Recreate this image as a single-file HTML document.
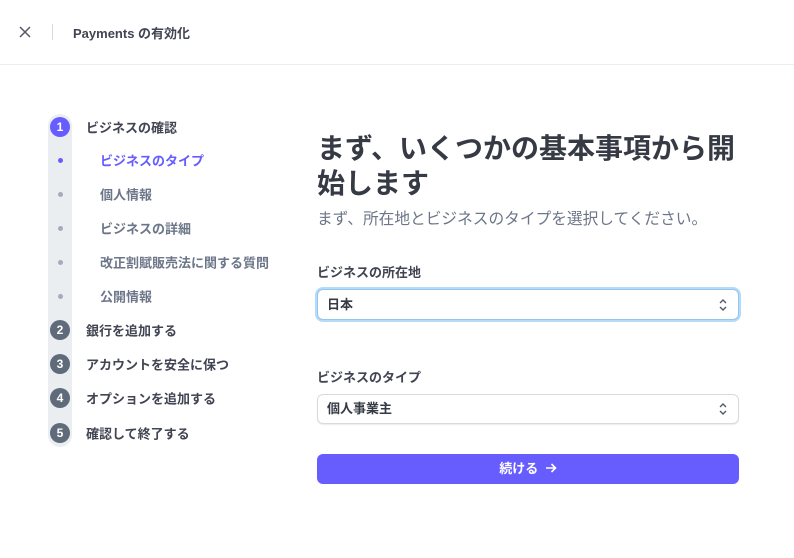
<!DOCTYPE html>
<html><head><meta charset="utf-8"><style>
*{box-sizing:border-box;margin:0;padding:0}
body{width:794px;height:558px;background:#fff;font-family:"Liberation Sans","Noto Sans CJK JP",sans-serif;color:#353a44;position:relative;overflow:hidden}
.a{position:absolute;white-space:nowrap}
.hdr{position:absolute;left:0;top:0;width:794px;height:65px;border-bottom:1px solid #ebeef1}
.track{position:absolute;left:48px;top:114px;width:24px;height:333px;background:#ebeef1;border-radius:12px}
.c{position:absolute;left:50px;width:20px;height:20px;border-radius:50%;background:#5f6b7a;color:#fff;font-size:12px;font-weight:bold;text-align:center;line-height:20px}
.d{position:absolute;left:58px;width:5px;height:5px;border-radius:50%;background:#a3acba}
.m{position:absolute;left:86px;font-size:13px;font-weight:bold;color:#414552;transform:translateY(-50%)}
.s{position:absolute;left:100px;font-size:13px;font-weight:bold;color:#6c7688;transform:translateY(-50%)}
.sel{position:absolute;left:317px;width:422px;background:#fff;border:1px solid #d5dbe1;border-radius:6px;box-shadow:0 1px 1px rgba(0,0,0,.08);font-size:13px;font-weight:bold;color:#353a44;padding-left:9px}
.chev{position:absolute;right:10px;top:50%;transform:translateY(-50%)}
</style></head><body>
<div class="hdr"></div>
<svg class="a" style="left:19px;top:26px" width="12" height="12" viewBox="0 0 12 12"><path d="M1 1L11 11M11 1L1 11" stroke="#545969" stroke-width="1.5" fill="none"/></svg>
<div class="a" style="left:52px;top:24px;width:1px;height:16px;background:#d5dbe1"></div>
<div class="a" style="left:73px;top:23px;font-size:13px;font-weight:bold;color:#414552">Payments の有効化</div>

<div class="track"></div>
<div class="c" style="top:117px;background:#675dff">1</div>
<div class="m" style="top:127px">ビジネスの確認</div>
<div class="d" style="top:158px;background:#675dff"></div><div class="s" style="top:160px;color:#675dff">ビジネスのタイプ</div>
<div class="d" style="top:192px"></div><div class="s" style="top:194px">個人情報</div>
<div class="d" style="top:226px"></div><div class="s" style="top:228px">ビジネスの詳細</div>
<div class="d" style="top:260px"></div><div class="s" style="top:262px">改正割賦販売法に関する質問</div>
<div class="d" style="top:294px"></div><div class="s" style="top:296px">公開情報</div>
<div class="c" style="top:320px">2</div><div class="m" style="top:330px">銀行を追加する</div>
<div class="c" style="top:354px">3</div><div class="m" style="top:364px">アカウントを安全に保つ</div>
<div class="c" style="top:388px">4</div><div class="m" style="top:398px">オプションを追加する</div>
<div class="c" style="top:423px">5</div><div class="m" style="top:433px">確認して終了する</div>

<div class="a" style="left:317px;top:131px;font-size:28px;font-weight:bold;color:#353a44;line-height:35px">まず、いくつかの基本事項から開<br>始します</div>
<div class="a" style="left:317px;top:206px;font-size:15.7px;color:#6c7688">まず、所在地とビジネスのタイプを選択してください。</div>
<div class="a" style="left:317px;top:262px;font-size:13px;font-weight:bold;color:#414552">ビジネスの所在地</div>
<div class="sel" style="top:289px;height:31px;line-height:29px;border-color:#90c6f0;box-shadow:0 0 0 2px #b7dbf6">日本<svg class="chev" width="10" height="14" viewBox="0 0 10 14"><path d="M2 5L5 2L8 5M2 9L5 12L8 9" stroke="#545969" stroke-width="1.4" fill="none"/></svg></div>
<div class="a" style="left:317px;top:367px;font-size:13px;font-weight:bold;color:#414552">ビジネスのタイプ</div>
<div class="sel" style="top:394px;height:30px;line-height:28px">個人事業主<svg class="chev" width="10" height="14" viewBox="0 0 10 14"><path d="M2 5L5 2L8 5M2 9L5 12L8 9" stroke="#545969" stroke-width="1.4" fill="none"/></svg></div>
<div class="a" style="left:317px;top:454px;width:422px;height:30px;background:#675dff;border-radius:6px;color:#fff;font-size:13px;font-weight:bold;text-align:center;line-height:30px">続ける <svg width="12" height="12" viewBox="0 0 12 12" style="vertical-align:-1px;margin-left:3px"><path d="M1 6H10.5M6.5 2L10.5 6L6.5 10" stroke="#fff" stroke-width="1.6" fill="none"/></svg></div>
</body></html>
